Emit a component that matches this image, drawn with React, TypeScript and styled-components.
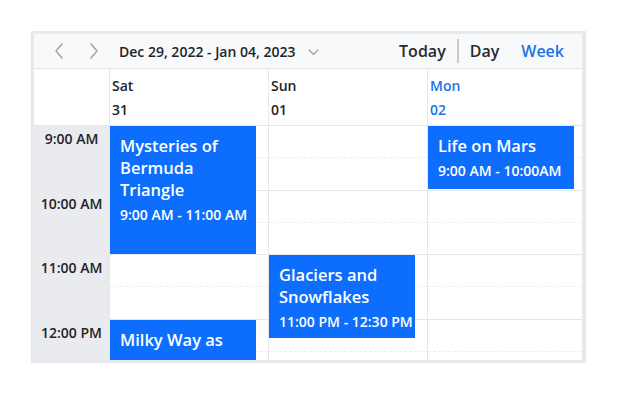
import React from "react";
import styled, { createGlobalStyle } from "styled-components";

const Global = createGlobalStyle`
  html, body { margin: 0; padding: 0; background: #ffffff; }
  body { font-family: "Open Sans", "Noto Sans", sans-serif; color: #212529; }
  * { box-sizing: border-box; }
`;

const Page = styled.div`
  padding: 31px 0 0 31px;
`;

const Frame = styled.div`
  width: 555px;
  height: 332px;
  border: 3px solid #e8e9ea;
  border-right-width: 4px;
  display: flex;
  flex-direction: column;
  overflow: hidden;
  background: #ffffff;
`;

const Toolbar = styled.div`
  height: 35px;
  flex: none;
  background: #f8f9fa;
  border-bottom: 1px solid #e6e7e8;
  display: flex;
  align-items: center;
  padding: 0 0 0 15px;
`;

const NavButton = styled.button<{ $gap: number }>`
  border: none;
  background: transparent;
  width: 20px;
  height: 24px;
  padding: 0;
  display: flex;
  align-items: center;
  justify-content: center;
  margin-right: ${(p) => p.$gap}px;
`;

const DateRange = styled.div`
  font-size: 14px;
  font-weight: 600;
  color: #212529;
  display: flex;
  align-items: center;
`;

const DownWrap = styled.span`
  display: inline-flex;
  margin-left: 12px;
  margin-top: 2px;
`;

const Spacer = styled.div`
  flex: 1;
`;

const ViewButton = styled.div<{ $active?: boolean }>`
  font-size: 16px;
  font-weight: 600;
  color: ${(p) => (p.$active ? "#1a73e8" : "#262a2e")};
  padding: 0 ${(p) => (p.$active ? "18px" : "11px")} 0 11px;
`;

const Separator = styled.div`
  width: 2px;
  height: 24px;
  background: #c9cbcd;
`;

const Columns = styled.div`
  display: grid;
  grid-template-columns: 75px 159px 159px 155px;
`;

const HeaderRow = styled(Columns)`
  height: 57px;
  flex: none;
  border-bottom: 1px solid #e6e7e8;
`;

const HeaderCell = styled.div<{ $today?: boolean }>`
  border-left: 1px solid #e6e7e8;
  padding: 5px 0 0 2px;
  font-size: 14px;
  font-weight: 600;
  line-height: 24px;
  color: ${(p) => (p.$today ? "#1a73e8" : "#212529")};
`;

const CornerCell = styled.div``;

const Body = styled(Columns)`
  flex: 1;
  overflow: hidden;
`;

const TimeColumn = styled.div`
  background: #e9ebee;
`;

const TimeLabel = styled.div`
  height: 64.5px;
  text-align: center;
  font-size: 14px;
  font-weight: 600;
  color: #1f2327;
  padding-top: 3px;
  line-height: 20px;
`;

const DayColumn = styled.div`
  position: relative;
  border-left: 1px solid #e6e7e8;
`;

const Slot = styled.div<{ $hour: boolean }>`
  height: 32.25px;
  border-bottom: 1px ${(p) => (p.$hour ? "solid #e6e7e8" : "dashed #ebedef")};
`;

const Event = styled.div`
  position: absolute;
  left: 0;
  width: 146px;
  background: #0d6efd;
  color: #ffffff;
  padding: 9px 5px 0 10px;
  overflow: hidden;
`;

const EventTitle = styled.div`
  font-size: 16.5px;
  font-weight: 600;
  line-height: 22px;
`;

const EventTime = styled.div`
  font-size: 14px;
  font-weight: 600;
  line-height: 22px;
  margin-top: 3px;
  white-space: nowrap;
`;

const Chevron = ({ dir }: { dir: "left" | "right" }) => (
  <svg width="10" height="16" viewBox="0 0 10 16" fill="none">
    <path
      d={dir === "left" ? "M8 1 L2 8 L8 15" : "M2 1 L8 8 L2 15"}
      stroke="#9a9da0"
      strokeWidth="1.3"
      strokeLinecap="round"
      strokeLinejoin="round"
    />
  </svg>
);

const ChevronDown = () => (
  <svg width="11" height="7" viewBox="0 0 11 7" fill="none">
    <path d="M1 1 L5.5 5.5 L10 1" stroke="#9a9da0" strokeWidth="1.1" strokeLinecap="round" strokeLinejoin="round" />
  </svg>
);

type Ev = { title: string; time?: string; top: number; height: number };

const days: { name: string; num: string; today?: boolean; events: Ev[] }[] = [
  {
    name: "Sat",
    num: "31",
    events: [
      { title: "Mysteries of Bermuda Triangle", time: "9:00 AM - 11:00 AM", top: 0, height: 128 },
      { title: "Milky Way as", top: 194, height: 100 },
    ],
  },
  {
    name: "Sun",
    num: "01",
    events: [{ title: "Glaciers and Snowflakes", time: "11:00 PM - 12:30 PM", top: 129, height: 83 }],
  },
  {
    name: "Mon",
    num: "02",
    today: true,
    events: [{ title: "Life on Mars", time: "9:00 AM - 10:00AM", top: 0, height: 63 }],
  },
];

const hours = ["9:00 AM", "10:00 AM", "11:00 AM", "12:00 PM"];

export default function App() {
  return (
    <>
      <Global />
      <Page>
        <Frame>
          <Toolbar>
            <NavButton $gap={15} aria-label="Previous">
              <Chevron dir="left" />
            </NavButton>
            <NavButton $gap={15} aria-label="Next">
              <Chevron dir="right" />
            </NavButton>
            <DateRange>
              Dec 29, 2022 - Jan 04, 2023
              <DownWrap>
                <ChevronDown />
              </DownWrap>
            </DateRange>
            <Spacer />
            <ViewButton>Today</ViewButton>
            <Separator />
            <ViewButton>Day</ViewButton>
            <ViewButton $active>Week</ViewButton>
          </Toolbar>
          <HeaderRow>
            <CornerCell />
            {days.map((d) => (
              <HeaderCell key={d.name} $today={d.today}>
                <div>{d.name}</div>
                <div>{d.num}</div>
              </HeaderCell>
            ))}
          </HeaderRow>
          <Body>
            <TimeColumn>
              {hours.map((h) => (
                <TimeLabel key={h}>{h}</TimeLabel>
              ))}
            </TimeColumn>
            {days.map((d) => (
              <DayColumn key={d.name}>
                {Array.from({ length: 8 }).map((_, i) => (
                  <Slot key={i} $hour={i % 2 === 1} />
                ))}
                {d.events.map((e) => (
                  <Event key={e.title} style={{ top: e.top, height: e.height }}>
                    <EventTitle>{e.title}</EventTitle>
                    {e.time && <EventTime>{e.time}</EventTime>}
                  </Event>
                ))}
              </DayColumn>
            ))}
          </Body>
        </Frame>
      </Page>
    </>
  );
}
